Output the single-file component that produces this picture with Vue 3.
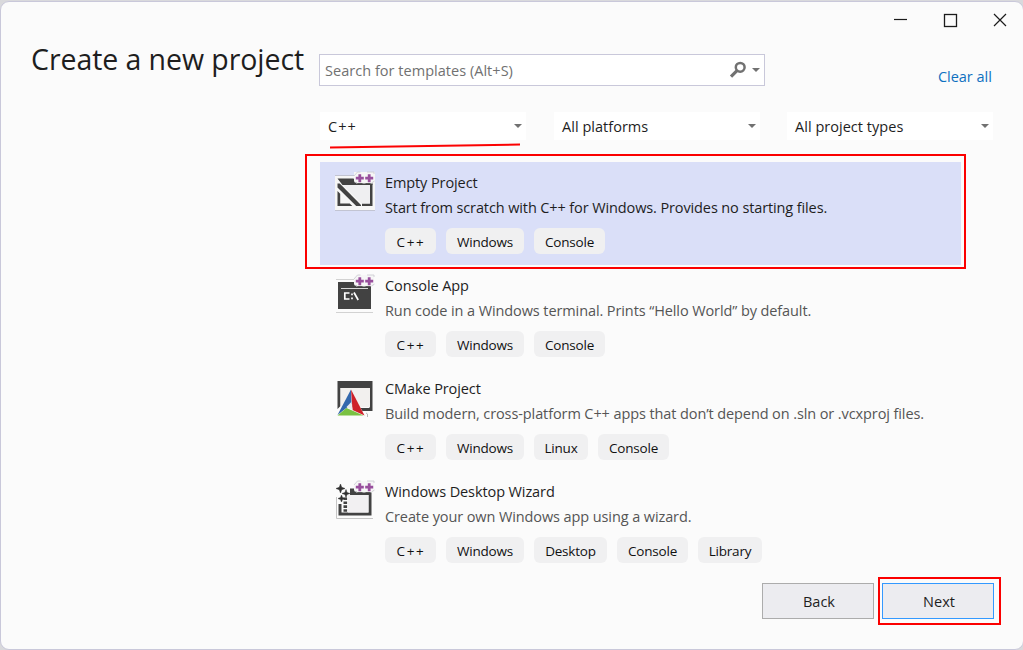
<script setup>
const tagWidths = { 'C++': 51, Windows: 78, Console: 71, Linux: 54, Desktop: 73, Library: 64 }

const filters = [
  { label: 'C++', kind: 'lang' },
  { label: 'All platforms', kind: 'platform' },
  { label: 'All project types', kind: 'type' },
]

const templates = [
  { id: 'empty', name: 'Empty Project', text: 'Start from scratch with C++ for Windows. Provides no starting files.', tags: ['C++', 'Windows', 'Console'] },
  { id: 'console', name: 'Console App', text: 'Run code in a Windows terminal. Prints “Hello World” by default.', tags: ['C++', 'Windows', 'Console'] },
  { id: 'cmake', name: 'CMake Project', text: 'Build modern, cross-platform C++ apps that don’t depend on .sln or .vcxproj files.', tags: ['C++', 'Windows', 'Linux', 'Console'] },
  { id: 'wizard', name: 'Windows Desktop Wizard', text: 'Create your own Windows app using a wizard.', tags: ['C++', 'Windows', 'Desktop', 'Console', 'Library'] },
]
</script>

<template>
  <div class="desktop">
    <main class="window">
      <div class="controls">
        <svg width="120" height="20" viewBox="0 0 120 20" fill="none" stroke="#1b1b1b">
          <path d="M3 9.500h13" stroke-width="1.2" />
          <rect x="53.5" y="4.500" width="12" height="12" stroke-width="1.3" />
          <path d="M103 4l12 12M115 4l-12 12" stroke-width="1.2" />
        </svg>
      </div>

      <header class="head">
        <h1>Create a new project</h1>
        <div class="search">
          <span>Search for templates (Alt+S)</span>
          <svg class="lens" width="18" height="18" viewBox="0 0 18 18" fill="none" stroke="#717171">
            <circle cx="11.2" cy="6.3" r="4.4" stroke-width="2.5" />
            <path d="M8 9.600L2 15.600" stroke-width="3.2" />
          </svg>
          <i class="caret"></i>
        </div>
        <a class="clear">Clear all</a>
      </header>

      <div class="filters">
        <div v-for="f in filters" :key="f.kind" class="filter" :class="f.kind">
          <span>{{ f.label }}</span><i class="caret"></i>
        </div>
      </div>

      <section class="list">
        <article v-for="t in templates" :key="t.id" class="item" :class="[t.id, { selected: t.id === 'empty' }]">
          <svg class="icon" width="42" height="42" viewBox="0 0 42 42">
            <template v-if="t.id === 'empty'">
              <path d="M2 6h19V2h21v38H2z" fill="#f6f6f6" />
              <path d="M2 40.500h40M2 5.500h19" stroke="#c2c4d2" />
              <path d="M4.500 8.500h16l3 3.500h16v3H9.500z" fill="#424242" />
              <path d="M38.200 14v20.700H29" stroke="#424242" stroke-width="2.600" fill="none" />
              <path d="M10 15h27v18.500H28.500z" fill="#efeff1" />
              <path d="M4.500 21l2.700 2.700v9.800h9.500l2.600 2.600H4.500z" fill="#424242" />
              <path d="M4.500 13.500h2.200L28 35v1.100h-4.800L4.500 17.500z" fill="#424242" />
            </template>
            <template v-else-if="t.id === 'console'">
              <path d="M3 6.500h19M3 39.500h37" stroke="#d2d2d2" />
              <path d="M5 9h33v27H5z" fill="#424242" />
              <path d="M8 15.500h27" stroke="#d8d8d8" />
              <path d="M16.500 20h-4.700v6h4.700M19 20.500v1.700M19 24.500v1.700M21 19.500l4.200 7.500" stroke="#fff" stroke-width="1.700" fill="none" />
            </template>
            <template v-else-if="t.id === 'cmake'">
              <path d="M4.500 5h35v30H29.500l-2-3h9V12h-29v18l-3 3z" fill="#424242" />
              <path d="M7.500 12h29.500v19H7.500z" fill="#f2f0ee" />
              <path d="M18 13.500L18.500 28 4.500 39z" fill="#3468ad" />
              <path d="M18 13.500L31.500 39.500 19.500 34z" fill="#ce2029" />
              <path d="M4.500 39.500L13.500 32l17 7.500z" fill="#7ac142" />
              <path d="M18.300 26l1.200 8-6-3z" fill="#e7e8ec" />
              <path d="M33 37l1.500 1v3" stroke="#b7b7b7" fill="none" />
            </template>
            <template v-else>
              <path d="M3.500 18v21.500H40" stroke="#c5c5c5" fill="none" />
              <path d="M17 9.500h7l3 3.500h11.500v23.500H5.500V25h3v8.500h27V16H17z" fill="#424242" />
              <path d="M15 16h20.500v17.500H15z" fill="#f2f0f2" />
              <path d="M12.300 18.500v14.500" stroke="#424242" stroke-width="3.600" stroke-dasharray="2.600 1.300" />
              <path d="M7.500 5l1.200 3.300 3.300 1.200-3.300 1.200-1.200 3.300-1.200-3.300L3 9.500l3.300-1.200zM13 10.500l1 3 3 1-3 1-1 3-1-3-3-1 3-1zM8.500 16l1 2.500 2.500 1-2.500 1-1 2.500-1-2.500-2.500-1 2.500-1z" fill="#303030" stroke="#303030" stroke-width=".5" />
            </template>
            <template v-if="t.id !== 'cmake'">
              <path d="M21 5.500l3.500-3.500H41v10l-2 1.500H25L21 11.500z" fill="#f6f6f6" />
              <path d="M21 6l3.500-4h3M34 2h7v2M21 11.500l3 2M38.500 13l3-2" stroke="#c9c9cf" fill="none" stroke-width=".8" />
              <path d="M22.800 8.200h8M26.800 4.200v8M32.200 8.200h8M36.200 4.200v8" stroke="#984f9d" stroke-width="2.800" />
              <path d="M25 14h4.500M32.500 14h5" stroke="#424242" stroke-width="1.600" />
            </template>
          </svg>
          <div class="body">
            <h2>{{ t.name }}</h2>
            <p>{{ t.text }}</p>
            <div class="tags">
              <span v-for="tag in t.tags" :key="tag" :class="{ wide: tag === 'C++' }" :style="{ width: tagWidths[tag] + 'px' }">{{ tag }}</span>
            </div>
          </div>
        </article>
      </section>

      <footer class="actions">
        <button>Back</button>
        <button class="primary">Next</button>
      </footer>

      <svg class="marks" width="1023" height="650" fill="none" stroke="#fb0000" stroke-width="2">
        <path d="M330 147.500L520 144.500" />
        <rect x="306" y="155" width="659" height="113" />
        <rect x="879" y="578" width="121" height="46" />
      </svg>
    </main>
  </div>
</template>

<style>
body { margin: 0; overflow: hidden; }
</style>

<style scoped>
.desktop { height: 650px; width: 1023px; box-sizing: border-box; padding-top: 1px; background: #d9d9dc; overflow: hidden; font-family: "Open Sans", "Noto Sans", sans-serif; color: #1e1e1e; }
.window { box-sizing: border-box; width: 1024px; height: 649px; border: 1px solid #c9c8da; border-radius: 9px; background: #fbfbfb; display: flex; flex-direction: column; }
.controls { height: 32px; padding-top: 8px; box-sizing: border-box; display: flex; justify-content: flex-end; padding-right: 12px; }
.head { height: 76px; display: flex; align-items: flex-start; padding-left: 30px; }
h1 { margin: 2px 0 0; width: 288px; font-size: 28.5px; line-height: 46px; font-weight: 400; white-space: nowrap; letter-spacing: -0.07px; }
.search { box-sizing: border-box; width: 446px; height: 32px; margin-top: 20px; border: 1px solid #c9c8da; background: #fff; display: flex; align-items: center; padding: 0 4px 0 5px; color: #717171; font-size: 14.5px; letter-spacing: 0.03px; }
.search span { flex: 1; white-space: nowrap; }
.lens { margin-right: 5px; }
.caret { width: 0; height: 0; border: 4px solid transparent; border-top: 4px solid #717171; border-bottom: 0; }
.clear { margin: 32px 0 0 173px; font-size: 14.5px; line-height: 22px; color: #0e70c0; white-space: nowrap; letter-spacing: -0.03px; }
.filters { display: flex; height: 28px; margin-top: 2px; padding-left: 319px; gap: 28px; }
.filter { box-sizing: border-box; width: 206px; background: #fff; display: flex; align-items: center; justify-content: space-between; padding: 0 4px 0 8px; font-size: 14.5px; letter-spacing: 0.03px; }
.filter.lang { letter-spacing: 1.1px; }
.filter.type { margin-left: -1px; }
.list { margin: 22px 0 0 319px; width: 641px; }
.item { height: 103px; box-sizing: border-box; padding: 8px 0 0 13px; display: flex; align-items: flex-start; }
.selected { background: #dadff8; }
.icon { flex: none; margin-right: 10px; }
h2, p { margin: 0; font-size: 14.5px; line-height: 25px; font-weight: 400; white-space: nowrap; letter-spacing: -0.1px; }
p { color: #555; }
.selected p { color: #1e1e1e; letter-spacing: -0.115px; }
.tags { display: flex; gap: 10px; margin-top: 8px; }
.tags span { box-sizing: border-box; height: 26px; line-height: 28px; border-radius: 6px; background: #f0f0f1; text-align: center; font-size: 13.5px; letter-spacing: -0.2px; color: #111; }
.tags .wide { letter-spacing: 1.7px; padding-left: 1px; }
.actions { display: flex; gap: 8px; justify-content: flex-end; padding: 9px 29px 0 0; }
button { width: 112px; height: 36px; box-sizing: border-box; border: 1px solid #acacac; background: #ececf0; font: 14.5px "Open Sans", sans-serif; color: #1e1e1e; padding: 0 0 0 2px; }
.primary { border-color: #3399ff; }
.marks { position: absolute; left: 0; top: 0; pointer-events: none; }
</style>
